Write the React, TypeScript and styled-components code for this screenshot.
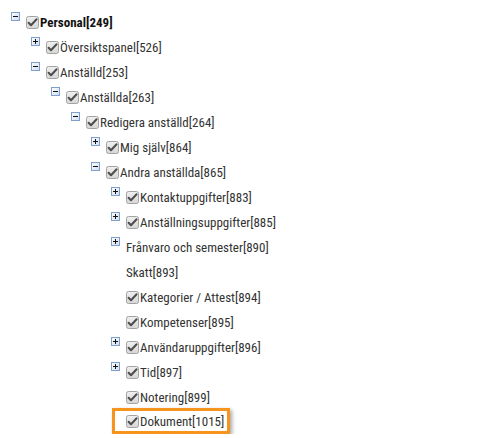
import React from "react";
import styled, { createGlobalStyle } from "styled-components";

const Global = createGlobalStyle`
  html, body { margin: 0; padding: 0; background: #fff; }
  body { font-family: "Roboto Condensed", "Liberation Sans Narrow", "Arial Narrow", Roboto, sans-serif; }
`;

type Node = {
  label: string;
  bold?: boolean;
  toggle?: "open" | "closed";
  checked?: boolean;
  highlight?: boolean;
  children?: Node[];
};

const data: Node[] = [
  {
    label: "Personal[249]",
    bold: true,
    toggle: "open",
    checked: true,
    children: [
      { label: "Översiktspanel[526]", toggle: "closed", checked: true },
      {
        label: "Anställd[253]",
        toggle: "open",
        checked: true,
        children: [
          {
            label: "Anställda[263]",
            toggle: "open",
            checked: true,
            children: [
              {
                label: "Redigera anställd[264]",
                toggle: "open",
                checked: true,
                children: [
                  { label: "Mig själv[864]", toggle: "closed", checked: true },
                  {
                    label: "Andra anställda[865]",
                    toggle: "open",
                    checked: true,
                    children: [
                      { label: "Kontaktuppgifter[883]", toggle: "closed", checked: true },
                      { label: "Anställningsuppgifter[885]", toggle: "closed", checked: true },
                      { label: "Frånvaro och semester[890]", toggle: "closed" },
                      { label: "Skatt[893]" },
                      { label: "Kategorier / Attest[894]", checked: true },
                      { label: "Kompetenser[895]", checked: true },
                      { label: "Användaruppgifter[896]", toggle: "closed", checked: true },
                      { label: "Tid[897]", toggle: "closed", checked: true },
                      { label: "Notering[899]", checked: true },
                      { label: "Dokument[1015]", checked: true, highlight: true },
                    ],
                  },
                ],
              },
            ],
          },
        ],
      },
    ],
  },
];

const Page = styled.div`
  padding: 10px 0 0 11px;
`;

const List = styled.ul<{ $nested?: boolean }>`
  list-style: none;
  margin: 0;
  padding: 0 0 0 ${(p) => (p.$nested ? 20 : 0)}px;
`;

const Item = styled.li`
  margin: 0;
  padding: 0;
`;

const Row = styled.div<{ $highlight?: boolean }>`
  display: flex;
  width: ${(p) => (p.$highlight ? "fit-content" : "auto")};
  align-items: center;
  height: ${(p) => (p.$highlight ? 26 : 25)}px;
  margin-top: ${(p) => (p.$highlight ? -2 : 0)}px;
  margin-left: ${(p) => (p.$highlight ? 1 : 0)}px;
  padding-right: ${(p) => (p.$highlight ? 6 : 0)}px;
  box-shadow: ${(p) =>
    p.$highlight
      ? "inset 0 0 0 3px #f7941d, 2px 2px 4px rgba(0,0,0,0.35)"
      : "none"};
`;

const ToggleSlot = styled.span<{ $narrow?: boolean }>`
  width: ${(p) => (p.$narrow ? 14 : 15)}px;
  flex: 0 0 ${(p) => (p.$narrow ? 14 : 15)}px;
  align-self: flex-start;
  margin-top: 2px;
  height: 9px;
  display: flex;
`;

const CheckSlot = styled.span`
  width: 13px;
  height: 13px;
  flex: 0 0 13px;
  margin-right: 1px;
  display: flex;
`;

const Label = styled.span<{ $bold?: boolean }>`
  font-size: 13px;
  line-height: 15px;
  white-space: nowrap;
  color: ${(p) => (p.$bold ? "#111" : "#333")};
  font-weight: ${(p) => (p.$bold ? 700 : 400)};
`;

const ToggleIcon = ({ open }: { open: boolean }) => (
  <svg width="9" height="9" viewBox="0 0 9 9">
    <defs>
      <linearGradient id="tg" x1="0" y1="0" x2="1" y2="1">
        <stop offset="0" stopColor="#ffffff" />
        <stop offset="1" stopColor="#cfdcef" />
      </linearGradient>
    </defs>
    <rect x="0.5" y="0.5" width="8" height="8" fill="url(#tg)" stroke="#7f9fcf" />
    <rect x="2" y="4" width="5" height="1" fill="#111" />
    {!open && <rect x="4" y="2" width="1" height="5" fill="#111" />}
  </svg>
);

const CheckIcon = () => (
  <svg width="13" height="13" viewBox="0 0 13 13">
    <defs>
      <linearGradient id="cg" x1="0" y1="0" x2="0" y2="1">
        <stop offset="0" stopColor="#f0f0f0" />
        <stop offset="1" stopColor="#d6d6d6" />
      </linearGradient>
    </defs>
    <rect x="0.5" y="0.5" width="12" height="12" rx="2" fill="url(#cg)" stroke="#a3a3a3" />
    <path d="M2.6 6.8 L5 9.3 L10.6 3.2" fill="none" stroke="#4d4d4d" strokeWidth="2" strokeLinecap="round" strokeLinejoin="round" />
  </svg>
);

const TreeNode = ({ node }: { node: Node }) => (
  <Item>
    <Row $highlight={node.highlight}>
      <ToggleSlot $narrow={node.highlight}>
        {node.toggle && <ToggleIcon open={node.toggle === "open"} />}
      </ToggleSlot>
      {node.checked && (
        <CheckSlot>
          <CheckIcon />
        </CheckSlot>
      )}
      <Label $bold={node.bold}>{node.label}</Label>
    </Row>
    {node.children && (
      <List $nested>
        {node.children.map((c) => (
          <TreeNode key={c.label} node={c} />
        ))}
      </List>
    )}
  </Item>
);

export default function App() {
  return (
    <Page>
      <Global />
      <List>
        {data.map((n) => (
          <TreeNode key={n.label} node={n} />
        ))}
      </List>
    </Page>
  );
}
